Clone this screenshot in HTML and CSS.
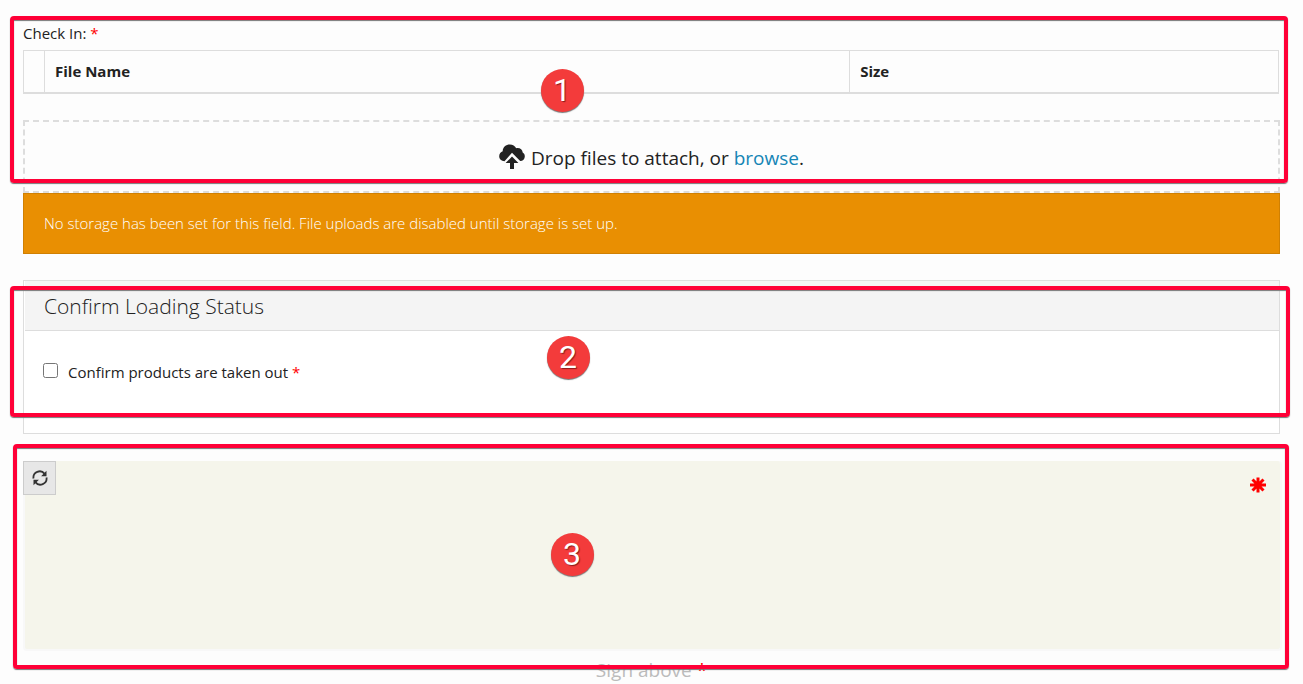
FILE: index.html
```html
<!DOCTYPE html>
<html lang="en">
<head>
<meta charset="utf-8">
<meta name="viewport" content="width=device-width, initial-scale=1">
<title>Check In</title>
<link rel="stylesheet" href="styles.css">
</head>
<body>
<main class="page">
  <section class="block upload">
    <div class="field-label">Check In: <span class="required">*</span></div>
    <table class="files">
      <thead>
        <tr><th class="col-select"></th><th class="col-name">File Name</th><th class="col-size">Size</th></tr>
      </thead>
    </table>
    <div class="dropzone">
      <svg class="cloud" viewBox="0 0 26 26" aria-hidden="true">
        <path fill="#222" d="M5.500 17.200C2.400 17 .2 15 .2 12.200c0-2.500 1.600-4.300 3.500-4.900C3.600 3.300 7 .5 10.800.5c3 0 5.200 1.400 6.400 3.700 3.600-.7 6.300 1.400 6.500 4.400 1.300.7 2.100 2.100 2.100 3.800 0 2.600-1.900 4.400-4.600 4.700L13 8.800z"/>
        <path fill="#222" d="M13 12.500l6.400 6.600h-4.400v6h-4v-6H6.600z"/>
      </svg>
      <span>Drop files to attach, or <a class="browse" href="#">browse</a>.</span>
    </div>
    <div class="frame frame-upload"></div>
    <div class="badge badge-upload">1</div>
  </section>

  <div class="alert" role="alert">No storage has been set for this field. File uploads are disabled until storage is set up.</div>

  <section class="block panel">
    <h2 class="panel-title">Confirm Loading Status</h2>
    <div class="panel-body">
      <input class="check" type="checkbox" id="confirm">
      <label for="confirm">Confirm products are taken out <span class="required">*</span></label>
    </div>
    <div class="frame frame-panel"></div>
    <div class="badge badge-panel">2</div>
  </section>

  <section class="block signature">
    <div class="pad">
      <button class="reset" type="button" aria-label="Clear signature">
        <svg viewBox="0 0 16 16" aria-hidden="true">
          <g fill="none" stroke="#333" stroke-width="1.800">
            <path d="M1.500 8.500A6.200 6.200 0 0 1 12.600 3.900"/>
            <path d="M14.500 7.500A6.200 6.200 0 0 1 3.400 12.100"/>
          </g>
          <path fill="#333" d="M14.500.8v5.400H9.100zM1.500 15.200V9.800h5.400z"/>
        </svg>
      </button>
      <svg class="mark" viewBox="0 0 16 16" aria-hidden="true">
        <path fill="none" stroke="#f00" stroke-width="3" d="M8 .5v15M0 8h16M2.500 2.500l11 11M13.500 2.500l-11 11"/>
      </svg>
    </div>
    <div class="sign-label">Sign above <span class="required">*</span></div>
    <div class="frame frame-signature"></div>
    <div class="badge badge-signature">3</div>
  </section>
</main>
</body>
</html>
```
FILE: styles.css
```css
* {
  box-sizing: border-box;
}

body {
  margin: 0;
  background: #fdfdfd;
  color: #222;
  font: 15px/20px "Open Sans", sans-serif;
}

.page {
  padding: 23px 23px 0;
}

.block {
  position: relative;
}

.required {
  color: #f00;
}

.field-label {
  margin-bottom: 7px;
}

.files {
  width: calc(100% - 1px);
  border-collapse: separate;
  border-spacing: 0;
  border: 1px solid #ddd;
  border-bottom-width: 2px;
}

.files th {
  height: 41px;
  padding: 0 10px 2px;
  text-align: left;
  font-weight: 700;
}

.files th + th {
  border-left: 1px solid #ddd;
}

.col-select {
  width: 20px;
}

.col-size {
  width: 34.200%;
}

.dropzone {
  display: flex;
  justify-content: center;
  gap: 6px;
  margin-top: 26px;
  padding: 22px 0 18px;
  border: 2px dashed #ddd;
  font-size: 19px;
  line-height: 29px;
}

.cloud {
  width: 26px;
  height: 26px;
}

.browse {
  color: #1585b5;
  text-decoration: none;
}

.alert {
  padding: 20px;
  border: 1px solid #d08002;
  background: #e98f02;
  color: #fff;
  font-weight: 300;
  line-height: 19px;
}

.panel {
  margin-top: 26px;
  border: 1px solid #ddd;
  background: #fff;
}

.panel-title {
  margin: 0 0 0 1px;
  padding: 9px 19px 8px;
  border-bottom: 1px solid #ddd;
  background: #f4f4f4;
  font-size: 21px;
  font-weight: 300;
  line-height: 32px;
}

.panel-body {
  display: flex;
  align-items: flex-start;
  gap: 10px;
  padding: 31px 19px 51px;
}

.check {
  width: 15px;
  height: 15px;
  margin: 1px 0 0;
}

.signature {
  margin-top: 27px;
}

.pad {
  display: flex;
  justify-content: space-between;
  align-items: flex-start;
  height: 190px;
  margin-right: -2px;
  border: 2px solid #f8f8f8;
  border-top: 0;
  border-radius: 4px;
  background: #f5f5eb;
}

.reset {
  display: grid;
  place-items: center;
  width: 33px;
  height: 34px;
  margin-left: -2px;
  padding: 0;
  border: 1px solid #ccc;
  background: #e7e7e7;
}

.reset svg {
  width: 16px;
  height: 16px;
}

.mark {
  width: 16px;
  height: 16px;
  margin: 16px 14px 0 0;
}

.sign-label {
  margin-top: 5px;
  color: #bbb;
  font-size: 19px;
  line-height: 28px;
  text-align: center;
}

.frame {
  position: absolute;
  border: 4px solid #ff0037;
  border-radius: 4px;
  box-shadow: 0 1px 1px #777, inset 0 1px 1px #777;
  pointer-events: none;
}

.frame-upload {
  inset: -7px -8px 10px -13px;
}

.frame-panel {
  inset: 5px -11px 16px -14px;
}

.frame-signature {
  inset: -17px -9px 15px -10px;
}

.badge {
  position: absolute;
  width: 43px;
  height: 43px;
  border-radius: 50%;
  background: #f33b3b;
  box-shadow: 0 1px 1px #777;
  color: #fff;
  font: 32px/43px Roboto, sans-serif;
  text-align: center;
  text-shadow: 1px 1px 1px #8a1c1c;
}

.badge-upload {
  top: 46px;
  left: calc(50% - 111px);
}

.badge-panel {
  top: 55px;
  left: calc(50% - 105px);
}

.badge-signature {
  top: 72px;
  left: calc(50% - 101px);
}
```
